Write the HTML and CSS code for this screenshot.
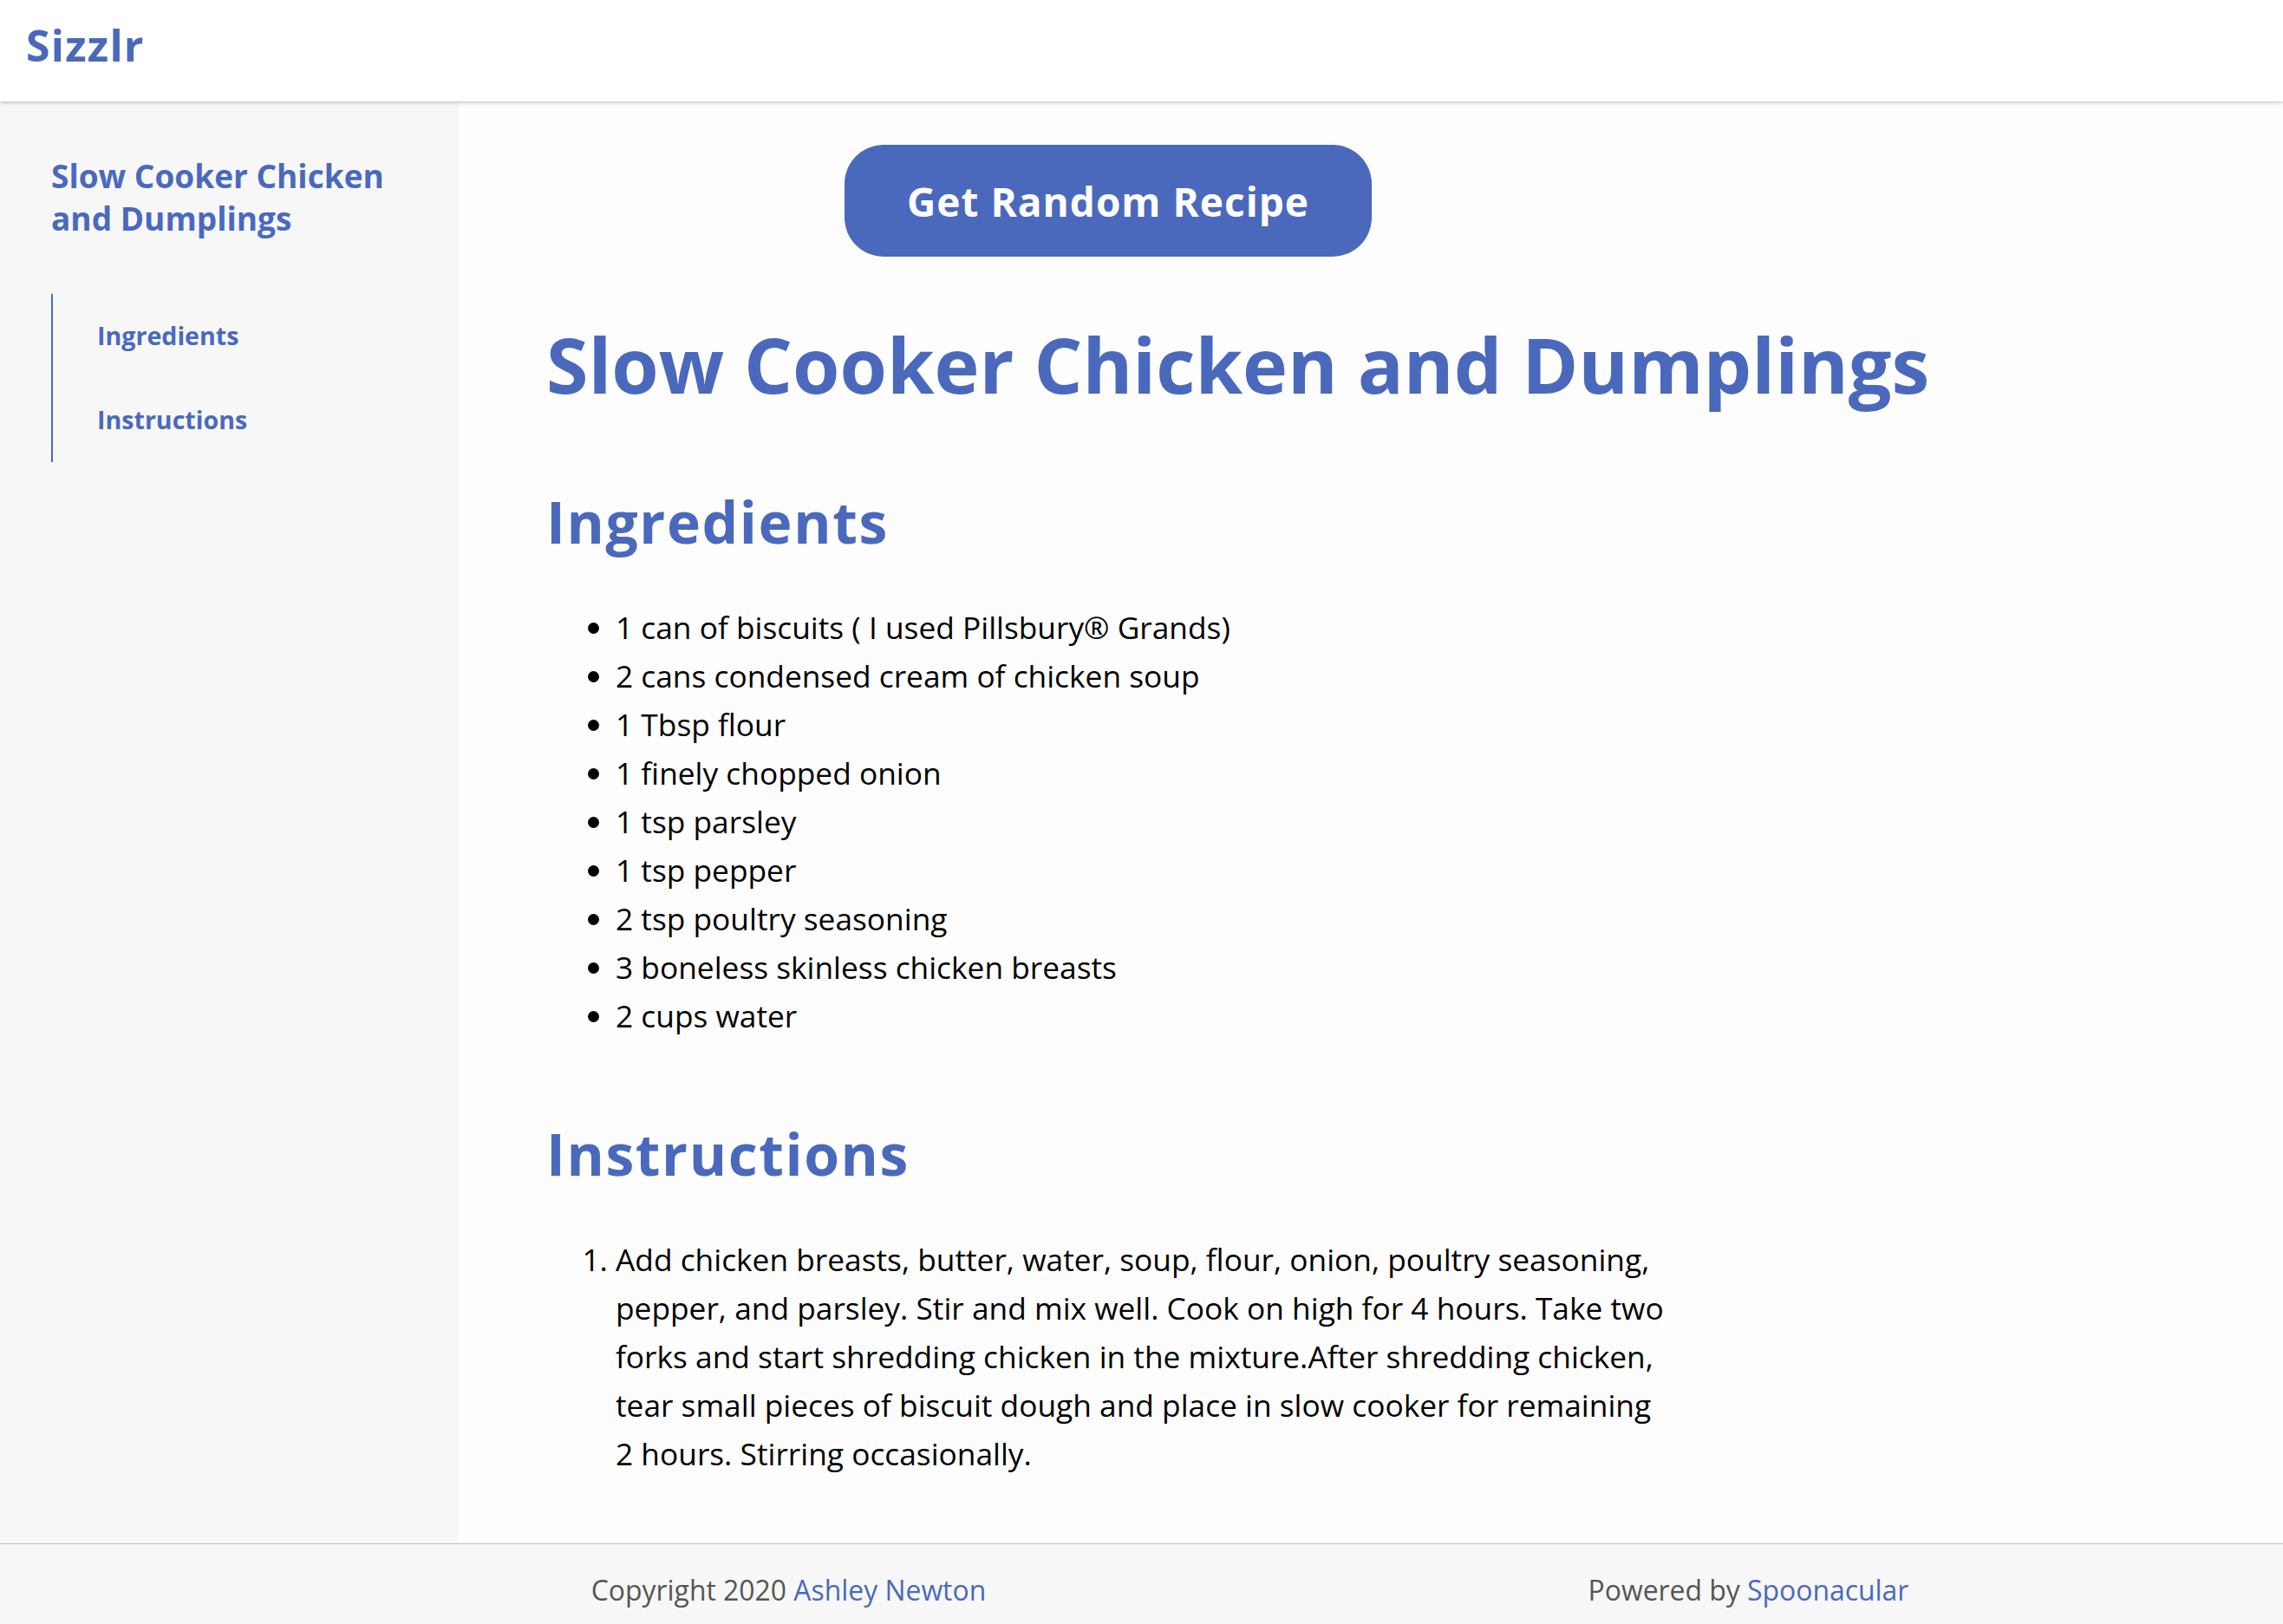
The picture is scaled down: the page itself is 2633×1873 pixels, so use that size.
FILE: index.html
```html
<!DOCTYPE html>
<html lang="en">
<head>
<meta charset="utf-8">
<title>Sizzlr</title>
<link rel="stylesheet" href="styles.css">
</head>
<body>
<header class="topbar">
  <div class="brand">Sizzlr</div>
</header>
<div class="layout">
  <aside class="sidebar">
    <div class="side-title">Slow Cooker Chicken and Dumplings</div>
    <ul class="side-nav">
      <li><a href="#ingredients">Ingredients</a></li>
      <li><a href="#instructions">Instructions</a></li>
    </ul>
  </aside>
  <main class="content">
    <div class="column">
      <div class="btn-row"><button class="random-btn">Get Random Recipe</button></div>
      <h1 class="recipe-title">Slow Cooker Chicken and Dumplings</h1>
      <section class="section first" id="ingredients">
        <h2>Ingredients</h2>
        <ul class="ing-list">
          <li>1 can of biscuits ( I used Pillsbury® Grands)</li>
          <li>2 cans condensed cream of chicken soup</li>
          <li>1 Tbsp flour</li>
          <li>1 finely chopped onion</li>
          <li>1 tsp parsley</li>
          <li>1 tsp pepper</li>
          <li>2 tsp poultry seasoning</li>
          <li>3 boneless skinless chicken breasts</li>
          <li>2 cups water</li>
        </ul>
      </section>
      <section class="section" id="instructions">
        <h2>Instructions</h2>
        <ol class="steps">
          <li>Add chicken breasts, butter, water, soup, flour, onion, poultry seasoning, pepper, and parsley. Stir and mix well. Cook on high for 4 hours. Take two forks and start shredding chicken in the mixture.After shredding chicken, tear small pieces of biscuit dough and place in slow cooker for remaining 2 hours. Stirring occasionally.</li>
        </ol>
      </section>
    </div>
  </main>
</div>
<footer class="footer">
  <div class="foot-item">Copyright 2020 <a href="#">Ashley Newton</a></div>
  <div class="foot-item">Powered by <a href="#">Spoonacular</a></div>
</footer>
</body>
</html>
```
FILE: styles.css
```css
* { box-sizing: border-box; }
html, body { margin: 0; padding: 0; }
body {
  font-family: "Open Sans", "Noto Sans", sans-serif;
  background: #fdfdfd;
  color: #000;
}
a { color: #4a69bd; text-decoration: none; }

.topbar {
  position: relative;
  z-index: 2;
  height: 117px;
  background: #fff;
  box-shadow: 0 1px 4px rgba(0,0,0,0.28);
  padding: 18px 0 0 30px;
}
.brand {
  font-size: 50px;
  font-weight: 700;
  letter-spacing: 1.2px;
  color: #4a69bd;
  line-height: normal;
}

.layout {
  display: flex;
  align-items: stretch;
}
.sidebar {
  width: 529px;
  flex: none;
  background: #f7f7f7;
  padding: 61px 40px 0 59px;
}
.side-title {
  font-size: 37px;
  font-weight: 700;
  line-height: 49.4px;
  color: #4a69bd;
}
.side-nav {
  list-style: none;
  margin: 62px 0 0;
  padding: 0 0 0 51px;
  border-left: 2px solid #4a69bd;
}
.side-nav li {
  padding: 28.5px 0;
  font-size: 28.6px;
  font-weight: 700;
  line-height: 40px;
}

.content {
  flex: 1;
  padding: 50px 0 76px 101px;
}
.column {
  width: 1296px;
}
.btn-row {
  display: flex;
  justify-content: center;
}
.random-btn {
  font-family: inherit;
  font-size: 46px;
  font-weight: 700;
  letter-spacing: 1px;
  line-height: normal;
  color: #fff;
  background: #4a69bd;
  border: none;
  border-radius: 45px;
  padding: 33px 72px;
  height: 129px;
}
.recipe-title {
  margin: 64px 0 0;
  font-size: 88px;
  font-weight: 700;
  line-height: 121px;
  color: #4a69bd;
  white-space: nowrap;
}
.section h2 {
  margin: 0 0 49px;
  font-size: 66px;
  font-weight: 700;
  letter-spacing: 1.6px;
  line-height: normal;
  color: #4a69bd;
}
.section.first { margin-top: 75px; }
.section + .section { margin-top: 86px; }
.ing-list, .steps {
  margin: 0;
  padding-left: 80px;
  font-size: 35.3px;
  line-height: 56px;
}

.footer {
  display: grid;
  grid-template-columns: 1fr 1fr;
  background: #f7f7f7;
  border-top: 1px solid #bdbdbd;
  height: 93px;
  padding: 31px 63px 0 356px;
  font-size: 31.9px;
  line-height: normal;
  color: #555;
}
.foot-item { text-align: center; }
```
